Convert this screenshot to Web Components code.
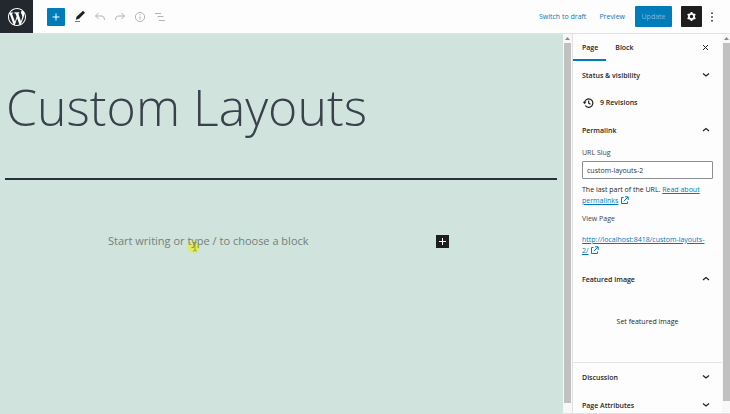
<!DOCTYPE html>
<html lang="en">
<head>
<meta charset="utf-8">
<title>Custom Layouts</title>
<style>
    :root {
        --accent: #007cba;
        --ink: #1e1e1e;
        --line: #e2e2e2;
        --canvas: #d0e3dc;
        --title: #39414d;
    }

    body {
        margin: 0;
        font: 7px/11px "Open Sans", "Noto Sans", sans-serif;
        color: var(--ink);
        background: #fdfdfd;
    }
</style>
</head>
<body>
<block-editor>
    <editor-header slot="header"></editor-header>
    <editor-canvas slot="canvas"></editor-canvas>
    <scroll-track slot="canvas-scroll"></scroll-track>
    <settings-sidebar slot="sidebar">
        <settings-panel heading="Status &amp; visibility">
            <revisions-link count="9"></revisions-link>
        </settings-panel>
        <settings-panel heading="Permalink" open>
            <permalink-form></permalink-form>
        </settings-panel>
        <settings-panel heading="Featured image" open>
            <featured-image></featured-image>
        </settings-panel>
        <settings-panel heading="Discussion" divided></settings-panel>
        <settings-panel heading="Page Attributes"></settings-panel>
    </settings-sidebar>
    <scroll-track slot="sidebar-scroll" flush></scroll-track>
</block-editor>

<script>
const baseStyle = `
    :host, *, *::before, *::after { box-sizing: border-box; }
    svg { display: block; fill: none; stroke: currentColor; }
    button { margin: 0; padding: 0; border: 0; background: none; font: inherit; color: inherit; cursor: pointer; }
    a { color: var(--accent); }
    h1, h2, p { margin: 0; }
`;

class BaseElement extends HTMLElement {
    constructor() {
        super();
        this.attachShadow({ mode: 'open' });
    }

    connectedCallback() {
        this.shadowRoot.innerHTML = `<style>${baseStyle}</style>${this.render()}`;
    }
}

class BlockEditor extends BaseElement {
    render() {
        return `
            <style>
                :host {
                    display: flex;
                    flex-direction: column;
                    height: 100vh;
                    overflow: hidden;
                }

                .body {
                    display: flex;
                    flex: 1;
                    min-height: 0;
                }

                .canvas {
                    display: flex;
                    flex: 1;
                    min-width: 0;
                }

                aside {
                    display: flex;
                    flex: none;
                    width: 158px;
                    border-left: 1px solid var(--line);
                }
            </style>
            <slot name="header"></slot>
            <div class="body">
                <main class="canvas">
                    <slot name="canvas"></slot>
                    <slot name="canvas-scroll"></slot>
                </main>
                <aside>
                    <slot name="sidebar"></slot>
                    <slot name="sidebar-scroll"></slot>
                </aside>
            </div>
        `;
    }
}

class EditorHeader extends BaseElement {
    render() {
        return `
            <style>
                :host {
                    display: flex;
                    flex: none;
                    align-items: center;
                    justify-content: space-between;
                    height: 34px;
                    border-bottom: 1px solid var(--line);
                }

                .tools, .actions {
                    display: flex;
                    align-items: center;
                }

                .logo {
                    display: grid;
                    place-items: center;
                    width: 33px;
                    height: 33px;
                    margin-right: 14px;
                    background: #23282e;
                    color: #fff;
                }

                .add {
                    display: grid;
                    place-items: center;
                    width: 18px;
                    height: 18px;
                    margin-right: 8px;
                    border-radius: 1px;
                    background: var(--accent);
                    color: #fff;
                }

                .tool {
                    display: grid;
                    place-items: center;
                    width: 14px;
                    height: 18px;
                    margin-right: 6px;
                }

                .tool:disabled { color: #b4b4b4; }

                .actions { gap: 13px; padding-right: 14px; }
                .text { color: var(--accent); }

                .update {
                    width: 37px;
                    height: 21px;
                    margin-left: -3px;
                    border-radius: 1px;
                    background: var(--accent);
                    color: #7dbcdc;
                }

                .settings {
                    display: grid;
                    place-items: center;
                    width: 21px;
                    height: 21px;
                    margin-left: -4px;
                    border-radius: 1px;
                    background: var(--ink);
                    color: #fff;
                }

                .more { margin-left: -7px; }
            </style>
            <div class="tools">
                <a class="logo" href="#pages" aria-label="View pages">
                    <svg width="18" height="18" viewBox="0 0 20 20">
                        <path fill="currentColor" stroke="none" d="M20 10c0-5.51-4.49-10-10-10C4.48 0 0 4.49 0 10c0 5.52 4.48 10 10 10 5.51 0 10-4.48 10-10zM7.78 15.37L4.37 6.22c.55-.02 1.17-.08 1.17-.08.5-.06.44-1.13-.06-1.11 0 0-1.45.11-2.37.11-.18 0-.37 0-.58-.01C4.12 2.69 6.87 1.11 10 1.11c2.33 0 4.45.87 6.05 2.34-.68-.11-1.65.39-1.65 1.58 0 .74.45 1.36.9 2.1.35.61.55 1.36.55 2.46 0 1.49-1.4 5-1.4 5l-3.03-8.37c.54-.02.82-.17.82-.17.5-.05.44-1.25-.06-1.22 0 0-1.44.12-2.38.12-.87 0-2.33-.12-2.33-.12-.5-.03-.56 1.2-.06 1.22l.92.08 1.26 3.41zM17.41 10c.24-.64.74-1.87.43-4.25.7 1.29 1.05 2.71 1.05 4.25 0 3.29-1.73 6.24-4.4 7.78.97-2.59 1.94-5.2 2.92-7.78zM6.1 18.09C3.12 16.65 1.11 13.53 1.11 10c0-1.3.23-2.48.72-3.59C3.25 10.3 4.67 14.2 6.1 18.09zm4.03-6.63l2.58 6.98c-.86.29-1.76.45-2.71.45-.79 0-1.57-.11-2.29-.33.81-2.38 1.62-4.74 2.42-7.1z"/>
                    </svg>
                </a>
                <button class="add" aria-label="Add block">
                    <svg width="8" height="8" viewBox="0 0 8 8"><path d="M4 .5v7M.5 4h7"/></svg>
                </button>
                <button class="tool" aria-label="Tools">
                    <svg width="12" height="13" viewBox="0 0 12 13">
                        <path stroke="none" fill="currentColor" d="M9 .8l2 1.900-6 6.100-3.200.9.800-2.900z"/>
                        <path stroke="#777" d="M1 11.500h5"/>
                    </svg>
                </button>
                <button class="tool" aria-label="Undo" disabled>
                    <svg width="12" height="10" viewBox="0 0 12 10"><path d="M4.500 1L1.500 4l3 3M1.500 4h6.500q2.500 0 2.500 4"/></svg>
                </button>
                <button class="tool" aria-label="Redo" disabled>
                    <svg width="12" height="10" viewBox="0 0 12 10"><path d="M7.500 1l3 3-3 3M10.500 4H4Q1.500 4 1.500 8"/></svg>
                </button>
                <button class="tool" aria-label="Details" disabled>
                    <svg width="12" height="12" viewBox="0 0 12 12"><circle cx="6" cy="6" r="4.600"/><path d="M6 5.300v3.400M6 3.200v1.100"/></svg>
                </button>
                <button class="tool" aria-label="List view" disabled>
                    <svg width="12" height="10" viewBox="0 0 12 10"><path d="M1 1.500h6M3.500 4.500h6M5 8.500h6"/></svg>
                </button>
            </div>
            <div class="actions">
                <button class="text">Switch to draft</button>
                <button class="text">Preview</button>
                <button class="update" aria-disabled="true">Update</button>
                <button class="settings" aria-label="Settings">
                    <svg width="11" height="11" viewBox="0 0 11 11">
                        <circle cx="5.500" cy="5.500" r="2.600" stroke-width="1.800"/>
                        <path stroke-width="1.800" d="M5.500 1v1.500M5.500 8.500V10M1.600 3.200l1.300.8M8.100 7l1.300.8M1.600 7.800L2.900 7M8.100 4l1.300-.8"/>
                    </svg>
                </button>
                <button class="more" aria-label="Options">
                    <svg width="8" height="10" viewBox="0 0 8 10"><path stroke-width="1.500" d="M4 .5V2M4 4.200v1.500M4 8v1.500"/></svg>
                </button>
            </div>
        `;
    }
}

class EditorCanvas extends BaseElement {
    render() {
        return `
            <style>
                :host {
                    display: block;
                    flex: 1;
                    min-width: 0;
                    padding: 36px 6px 0 5px;
                    background: var(--canvas);
                }

                h1 {
                    padding: 0 1px 34px;
                    border-bottom: 2px solid #28303d;
                    font-size: 50px;
                    line-height: 74px;
                    font-weight: 300;
                    color: var(--title);
                }

                .row {
                    display: flex;
                    align-items: center;
                    justify-content: space-between;
                    margin: 53px 108px 0 103px;
                }

                p {
                    isolation: isolate;
                    font-size: 11px;
                    line-height: 16px;
                    color: #74807c;
                }

                .word { position: relative; }

                /* the highlight sits under the letters */
                .pointer {
                    position: absolute;
                    z-index: -1;
                    top: 7px;
                    left: 0;
                    color: #9a9c35;
                }

                .add {
                    display: grid;
                    place-items: center;
                    width: 13px;
                    height: 13px;
                    background: var(--ink);
                    color: #fff;
                }
            </style>
            <h1>Custom Layouts</h1>
            <div class="row">
                <p>Start writing or <span class="word">type<svg class="pointer" width="13" height="13" viewBox="0 0 13 13" aria-hidden="true">
                    <circle cx="6.500" cy="6.500" r="6.300" fill="#e8ee2e" fill-opacity=".75" stroke="none"/>
                    <path d="M6 2.500h1.200l.8.700.8-.7h1M8 3.200v7M6 11h1.200l.8-.8.8.8h1"/>
                </svg></span> / to choose a block</p>
                <button class="add" aria-label="Add block">
                    <svg width="7" height="7" viewBox="0 0 7 7"><path d="M3.500 0v7M0 3.500h7"/></svg>
                </button>
            </div>
        `;
    }
}

class ScrollTrack extends BaseElement {
    render() {
        return `
            <style>
                :host {
                    display: flex;
                    flex: none;
                    flex-direction: column;
                    align-items: center;
                    width: 9px;
                    padding-bottom: 10px;
                    background: #f8f8f8;
                    border-bottom: 1px solid var(--line);
                }

                :host([flush]) { width: 8px; padding-bottom: 12px; }

                svg { flex: none; margin: 3px 0; }
                .thumb { flex: 1; width: 7px; background: #c1c1c1; }
            </style>
            <svg width="5" height="3" viewBox="0 0 5 3"><path fill="#8a8a8a" stroke="none" d="M0 3L2.500 0 5 3z"/></svg>
            <div class="thumb"></div>
        `;
    }
}

class SettingsSidebar extends BaseElement {
    render() {
        return `
            <style>
                :host {
                    display: block;
                    flex: 1;
                    min-width: 0;
                    overflow: hidden;
                    border-bottom: 1px solid var(--line);
                }

                nav {
                    display: flex;
                    height: 27px;
                    padding-right: 13px;
                }

                .tab {
                    padding: 2px 8px 0 9px;
                    border-bottom: 2px solid transparent;
                    font-weight: 600;
                }

                .tab[aria-pressed="true"] { border-color: var(--accent); }
                .close { margin-left: auto; }
            </style>
            <nav>
                <button class="tab" aria-pressed="true">Page</button>
                <button class="tab" aria-pressed="false">Block</button>
                <button class="close" aria-label="Close settings">
                    <svg width="7" height="7" viewBox="0 0 7 7"><path d="M1 1l5 5M6 1L1 6"/></svg>
                </button>
            </nav>
            <slot></slot>
        `;
    }
}

class SettingsPanel extends BaseElement {
    render() {
        const open = this.hasAttribute('open');
        const arrow = open ? 'M1 4l3-2.500L7 4' : 'M1 1.500L4 4l3-2.500';
        return `
            <style>
                :host { display: block; }
                :host([divided]) { border-top: 1px solid var(--line); }
                h2 { font: inherit; }

                button {
                    display: flex;
                    align-items: center;
                    justify-content: space-between;
                    width: 100%;
                    height: 28px;
                    padding: 0 12px 0 9px;
                    font-weight: 600;
                }
            </style>
            <h2>
                <button aria-expanded="${open}">
                    <span>${this.getAttribute('heading')}</span>
                    <svg width="8" height="6" viewBox="0 0 8 6"><path stroke-width="1.200" d="${arrow}"/></svg>
                </button>
            </h2>
            <slot></slot>
        `;
    }
}

class RevisionsLink extends BaseElement {
    render() {
        return `
            <style>
                button {
                    display: flex;
                    align-items: center;
                    gap: 6px;
                    height: 27px;
                    padding: 0 9px;
                    font-weight: 600;
                }
            </style>
            <button>
                <svg width="12" height="12" viewBox="0 0 12 12">
                    <path stroke-width="1.200" d="M2.500 5.500A4.200 4.200 0 1 1 3.200 8.500M6.700 3.500v2.700l1.800 1.100"/>
                    <path fill="currentColor" stroke="none" d="M.8 4.800h3.600L2.600 7.200z"/>
                </svg>
                ${this.getAttribute('count')} Revisions
            </button>
        `;
    }
}

class PermalinkForm extends BaseElement {
    render() {
        const external = `
            <svg width="9" height="9" viewBox="0 0 9 9" aria-hidden="true"><path d="M3.500 1.500h-2v6h6v-2M5 .8h3.200V4M8 1L3.800 5.200"/></svg>
        `;
        return `
            <style>
                :host {
                    display: block;
                    padding: 3px 9px 9px;
                }

                label { display: block; margin-bottom: 3px; color: #444; }

                input {
                    display: block;
                    width: 100%;
                    height: 18px;
                    padding: 0 4px;
                    border: 1px solid #8b8f94;
                    border-radius: 1px;
                    background: #fff;
                    font: inherit;
                    color: #2c3338;
                }

                p { padding-right: 6px; }
                .help { margin-top: 5px; }
                .view { margin: 7px 0 10px; color: #444; }
                svg { display: inline-block; vertical-align: -2px; color: var(--accent); }
            </style>
            <label for="slug">URL Slug</label>
            <input id="slug" type="text" value="custom-layouts-2">
            <p class="help">The last part of the URL. <a href="#permalinks"><span>Read about</span> <span>permalinks</span></a> ${external}</p>
            <p class="view">View Page</p>
            <p><a href="#page">http://localhost:8418/custom-layouts-2/</a> ${external}</p>
        `;
    }
}

class FeaturedImage extends BaseElement {
    render() {
        return `
            <style>
                :host { display: block; padding: 0 9px 13px; }
                button { width: 100%; height: 56px; }
            </style>
            <button>Set featured image</button>
        `;
    }
}

customElements.define('block-editor', BlockEditor);
customElements.define('editor-header', EditorHeader);
customElements.define('editor-canvas', EditorCanvas);
customElements.define('scroll-track', ScrollTrack);
customElements.define('settings-sidebar', SettingsSidebar);
customElements.define('settings-panel', SettingsPanel);
customElements.define('revisions-link', RevisionsLink);
customElements.define('permalink-form', PermalinkForm);
customElements.define('featured-image', FeaturedImage);
</script>
</body>
</html>
